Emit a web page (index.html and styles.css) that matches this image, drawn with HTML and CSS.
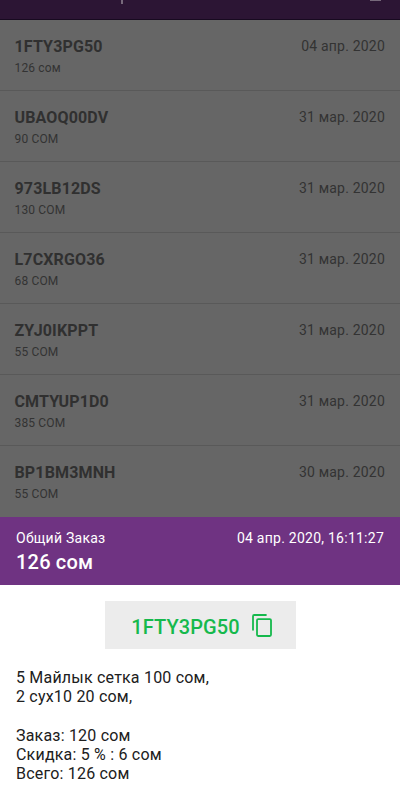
FILE: index.html
```html
<!DOCTYPE html>
<html lang="ru">
<head>
<meta charset="utf-8">
<title>Заказы</title>
<link rel="stylesheet" href="styles.css">
</head>
<body>
<main class="screen">
  <header class="appbar"><span class="title-tail"></span><span class="action-tail"></span></header>
  <section class="orders">
    <article class="order"><div><h2 class="code">1FTY3PG50</h2><p class="sum">126 сом</p></div><time class="date">04 апр. 2020</time></article>
    <article class="order"><div><h2 class="code">UBAOQ00DV</h2><p class="sum">90 СОМ</p></div><time class="date">31 мар. 2020</time></article>
    <article class="order"><div><h2 class="code">973LB12DS</h2><p class="sum">130 СОМ</p></div><time class="date">31 мар. 2020</time></article>
    <article class="order"><div><h2 class="code">L7CXRGO36</h2><p class="sum">68 СОМ</p></div><time class="date">31 мар. 2020</time></article>
    <article class="order"><div><h2 class="code">ZYJ0IKPPT</h2><p class="sum">55 СОМ</p></div><time class="date">31 мар. 2020</time></article>
    <article class="order"><div><h2 class="code">CMTYUP1D0</h2><p class="sum">385 СОМ</p></div><time class="date">31 мар. 2020</time></article>
    <article class="order"><div><h2 class="code">BP1BM3MNH</h2><p class="sum">55 СОМ</p></div><time class="date">30 мар. 2020</time></article>
  </section>
  <section class="sheet">
    <header class="sheet-head">
      <div><p class="label">Общий Заказ</p><p class="total">126 сом</p></div>
      <time class="stamp">04 апр. 2020, 16:11:27</time>
    </header>
    <button class="copy"><span>1FTY3PG50</span>
      <svg class="icon" viewBox="0 0 20 23" fill="none" stroke="currentColor" stroke-width="1.8" stroke-linejoin="round"><path d="M14.6 1H2.2Q1 1 1 2.2V16.5"/><rect x="5" y="5.1" width="14" height="16.9" rx="1.2"/></svg>
    </button>
    <div class="details">
      <p>5 Майлык сетка 100 сом,</p>
      <p>2 сух10 20 сом,</p>
      <p class="gap">Заказ: 120 сом</p>
      <p>Скидка: 5 % : 6 сом</p>
      <p>Всего: 126 сом</p>
    </div>
  </section>
</main>
</body>
</html>
```

FILE: styles.css
```css
* { box-sizing: border-box; }
body, p, h2 { margin: 0; }
body { font-family: Roboto, "Noto Sans", sans-serif; background: #fff; }
.screen { width: 400px; height: 800px; overflow: hidden; display: flex; flex-direction: column; }
.appbar { height: 20px; flex: none; background: #2c1534; border-bottom: 1px solid #180a20; display: flex; justify-content: space-between; align-items: flex-start; padding: 0 19px 0 121px; }
.title-tail { width: 2px; height: 4px; background: #77697b; }
.action-tail { width: 11px; height: 1px; background: #77697b; }
.orders { height: 497px; flex: none; overflow: hidden; background: #666; }
.order { height: 71px; border-bottom: 1px solid #595959; display: flex; justify-content: space-between; padding: 16px 15px 0; color: #303030; }
.order:last-child { border-bottom: 0; }
.code { font-size: 16px; line-height: 21px; font-weight: 700; letter-spacing: .15px; margin-left: -.5px; }
.sum { font-size: 12px; line-height: 16px; margin-top: 3px; letter-spacing: .15px; color: #333; margin-left: -.5px; }
.date { font-size: 14px; line-height: 20px; letter-spacing: .2px; color: #333; }
.sheet { flex: 1; display: flex; flex-direction: column; align-items: center; }
.sheet-head { width: 100%; height: 68px; background: #6f3382; color: #fff; display: flex; justify-content: space-between; padding: 11px 16px 0; }
.label, .stamp { font-size: 14px; line-height: 20px; letter-spacing: .25px; }
.total { font-size: 20px; line-height: 26px; margin-top: 1px; font-weight: 500; letter-spacing: .2px; }
.copy { width: 191px; height: 48px; margin: 16px 0 0 0; border: 0; padding: 3px 3px 0 6px; background: #ececec; color: #15b94c; display: flex; align-items: center; justify-content: center; gap: 12px; font: 500 20px/24px Roboto, sans-serif; letter-spacing: .1px; }
.icon { width: 20px; height: 23px; margin-top: -3px; }
.details { width: 100%; padding: 19px 16px 0; font-size: 16px; line-height: 19.3px; letter-spacing: .2px; color: #202020; }
.gap { margin-top: 19.3px; }
```
